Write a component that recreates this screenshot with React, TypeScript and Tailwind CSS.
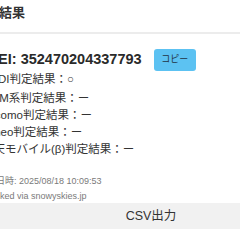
const font = "font-['Liberation_Sans','Noto_Sans_CJK_JP',sans-serif]";

const results = [
  { label: "KDDI判定結果", value: "○" },
  { label: "eSIM系判定結果", value: "ー" },
  { label: "docomo判定結果", value: "ー" },
  { label: "mineo判定結果", value: "ー" },
  { label: "楽天モバイル(β)判定結果", value: "ー" },
];

export default function App() {
  return (
    <div className={`h-[240px] w-[240px] overflow-hidden bg-white ${font}`}>
      <div className="ml-[-34px] w-[370px]">
        {/* header */}
        <div className="h-[34px] border-b-2 border-[#ececec] pl-[7px] pt-[5px]">
          <h2 className="text-[13px] leading-[16px] font-semibold text-[#333]">
            判定結果
          </h2>
        </div>

        {/* body */}
        <div className="px-4 pt-[15px]">
          <div className="flex h-[22px] items-center gap-[12px]">
            <span className="text-[14.5px] font-bold text-[#2a2a2a]">
              IMEI: 352470204337793
            </span>
            <button className="h-[22px] w-[42px] rounded-[3px] bg-[#5cc2f2] text-[9px] text-[#234]">
              コピー
            </button>
          </div>

          <div className="text-[11.5px] leading-[17px] text-[#333]">
            {results.map((r, i) => (
              <p key={r.label} className={i === 1 ? "mt-[2px]" : ""}>
                {r.label}：{r.value}
              </p>
            ))}
          </div>

          <div className="mt-[16px] text-[9px] leading-[15px] text-[#7a7a7a]">
            <p className="ml-[-4px]">判定日時: 2025/08/18 10:09:53</p>
            <p className="ml-[-3px]">Checked via snowyskies.jp</p>
          </div>
        </div>

        {/* footer */}
        <div className="mt-[-1px] flex h-[26px] items-center justify-center bg-[#f1f1f1] text-[12.5px] text-[#333]">
          CSV出力
        </div>
      </div>
    </div>
  );
}
